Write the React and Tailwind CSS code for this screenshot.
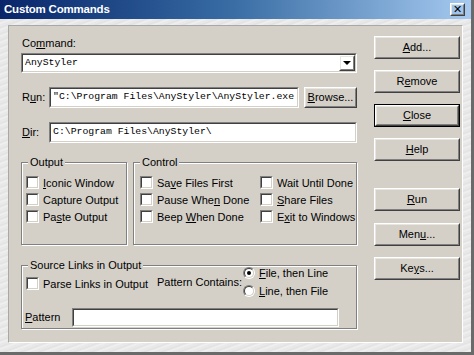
import React from "react";

const font = { fontFamily: '"Liberation Sans", Arial, sans-serif' };

const Raised = ({ children, className = "", isDefault = false }) => {
  const inner = (
    <div className="h-full w-full border border-t-white border-l-white border-r-[#404040] border-b-[#404040]">
      <div className="h-full w-full border border-t-[#e8e6e0] border-l-[#e8e6e0] border-r-[#808080] border-b-[#808080] flex items-center justify-center">
        {children}
      </div>
    </div>
  );
  if (isDefault) {
    return <div className={`border border-black ${className}`}>{inner}</div>;
  }
  return <div className={className}>{inner}</div>;
};

const Sunken = ({ children, className = "" }) => (
  <div className={`border border-t-[#808080] border-l-[#808080] border-r-white border-b-white ${className}`}>
    <div className="h-full w-full border border-t-[#404040] border-l-[#404040] border-r-[#d4d0c8] border-b-[#d4d0c8] bg-white flex items-center overflow-hidden">
      {children}
    </div>
  </div>
);

const Mono = ({ children }) => (
  <span className="pl-[2px] text-[9.8px] whitespace-nowrap text-black" style={{ fontFamily: '"Liberation Mono", "DejaVu Sans Mono", monospace' }}>
    {children}
  </span>
);

const Check = ({ children }) => (
  <div className="flex items-center h-[17px]">
    <Sunken className="w-[13px] h-[13px] shrink-0" />
    <span className="ml-[4px] text-[11px] leading-[14px] whitespace-nowrap">{children}</span>
  </div>
);

const Radio = ({ on, children }) => (
  <div className="flex items-center h-[18px]">
    <div className="w-[12px] h-[12px] rounded-full border border-t-[#808080] border-l-[#808080] border-r-white border-b-white shrink-0">
      <div className="w-full h-full rounded-full border border-t-[#404040] border-l-[#404040] border-r-[#d4d0c8] border-b-[#d4d0c8] bg-white flex items-center justify-center">
        {on && <div className="w-[4px] h-[4px] rounded-full bg-black" />}
      </div>
    </div>
    <span className="ml-[4px] text-[11px] leading-[14px] whitespace-nowrap">{children}</span>
  </div>
);

const Group = ({ label, className = "", children }) => (
  <div className={`relative border border-[#808080] shadow-[inset_1px_1px_0_#fff,1px_1px_0_#fff] ${className}`}>
    <span className="absolute -top-[8px] left-[6px] px-[2px] bg-[#d4d0c8] text-[11px] leading-[14px] whitespace-nowrap">
      {label}
    </span>
    {children}
  </div>
);

const U = ({ children }) => <span className="underline underline-offset-[1px]">{children}</span>;

const SideBtn = ({ children, className = "", isDefault }) => (
  <Raised isDefault={isDefault} className={`w-[86px] h-[23px] ${className}`}>
    <span className="text-[11px]">{children}</span>
  </Raised>
);

export default function App() {
  return (
    <div className="w-[474px] h-[355px] bg-[#6a6a6a] overflow-hidden text-black" style={font}>
      <div className="w-[471px] h-[352px] flex flex-col bg-[repeating-linear-gradient(160deg,#ebebeb_0px,#e2e2e2_2px,#f0f0f0_4px,#e6e6e6_6px)]">
        <div className="h-[19px] bg-linear-to-r from-[#0a246a] via-[#3a6ea5] to-[#a6caf0] flex items-center px-[4px]">
          <span className="text-white font-bold text-[11.5px] tracking-[-0.2px]">Custom Commands</span>
          <div className="ml-auto mr-[2px]">
            <Raised className="w-[15px] h-[13px]">
              <span className="text-[11px] font-bold leading-none" style={{ fontFamily: '"DejaVu Sans", sans-serif' }}>✕</span>
            </Raised>
          </div>
        </div>
        <div className="flex-1 px-[8px] pt-[6px] pb-[9px]">
          <div className="h-full border border-t-[#a8a8a8] border-l-[#a8a8a8] border-r-white border-b-white bg-[#d4d0c8] flex pl-[12px]">
            {/* left column */}
            <div className="w-[336px] flex flex-col">
              <div className="mt-[10px] h-[14px] text-[11px] leading-[14px] ml-[1px]">
                Co<U>m</U>mand:
              </div>
              <Sunken className="mt-[3px] h-[20px] w-[336px]">
                <Mono>AnyStyler</Mono>
                <Raised className="ml-auto w-[16px] h-[16px]">
                  <div className="w-0 h-0 border-l-[4px] border-r-[4px] border-t-[4px] border-l-transparent border-r-transparent border-t-black" />
                </Raised>
              </Sunken>
              <div className="mt-[14px] h-[21px] flex items-center">
                <span className="w-[27px] text-[11px] ml-[1px]">R<U>u</U>n:</span>
                <Sunken className="w-[250px] h-[21px]">
                  <Mono>"C:\Program Files\AnyStyler\AnyStyler.exe</Mono>
                </Sunken>
                <Raised className="ml-[5px] w-[53px] h-[21px]">
                  <span className="text-[11px]"><U>B</U>rowse...</span>
                </Raised>
              </div>
              <div className="mt-[14px] h-[21px] flex items-center">
                <span className="w-[27px] text-[11px] ml-[1px]"><U>D</U>ir:</span>
                <Sunken className="w-[308px] h-[21px]">
                  <Mono>C:\Program Files\AnyStyler\</Mono>
                </Sunken>
              </div>
              <div className="mt-[19px] flex">
                <Group label="Output" className="w-[106px] h-[83px] pl-[4px] pt-[11px]">
                  <Check><U>I</U>conic Window</Check>
                  <Check>Capture Output</Check>
                  <Check>Pa<U>s</U>te Output</Check>
                </Group>
                <Group label="Control" className="ml-[6px] w-[224px] h-[83px] pl-[6px] pt-[11px] flex">
                  <div className="w-[120px]">
                    <Check>Sa<U>v</U>e Files First</Check>
                    <Check>Pause Whe<U>n</U> Done</Check>
                    <Check>Beep <U>W</U>hen Done</Check>
                  </div>
                  <div>
                    <Check>Wait Until Done</Check>
                    <Check><U>S</U>hare Files</Check>
                    <Check>E<U>x</U>it to Windows</Check>
                  </div>
                </Group>
              </div>
              <Group label="Source Links in Output" className="mt-[20px] w-[336px] h-[64px] flex flex-col">
                <div className="flex h-[38px] pl-[4px]">
                  <div className="w-[131px] mt-[9px]">
                    <Check>Parse Links in Output</Check>
                  </div>
                  <div className="w-[86px] mt-[9px] text-[11px] leading-[14px]">Pattern Contains:</div>
                  <div className="-mt-[2px]">
                    <Radio on>
                      <U>F</U>ile, then Line
                    </Radio>
                    <Radio>
                      <U>L</U>ine, then File
                    </Radio>
                  </div>
                </div>
                <div className="mt-[4px] flex items-center h-[19px] pl-[3px]">
                  <span className="w-[47px] text-[11px]"><U>P</U>attern</span>
                  <Sunken className="w-[267px] h-[19px]" />
                </div>
              </Group>
            </div>
            {/* right column */}
            <div className="ml-[17px] flex flex-col">
              <SideBtn className="mt-[10px]"><U>A</U>dd...</SideBtn>
              <SideBtn className="mt-[11px]">R<U>e</U>move</SideBtn>
              <SideBtn className="mt-[11px]" isDefault><U>C</U>lose</SideBtn>
              <SideBtn className="mt-[11px]"><U>H</U>elp</SideBtn>
              <SideBtn className="mt-[27px]"><U>R</U>un</SideBtn>
              <SideBtn className="mt-[12px]">Men<U>u</U>...</SideBtn>
              <SideBtn className="mt-[11px]">Ke<U>y</U>s...</SideBtn>
            </div>
          </div>
        </div>
      </div>
    </div>
  );
}
